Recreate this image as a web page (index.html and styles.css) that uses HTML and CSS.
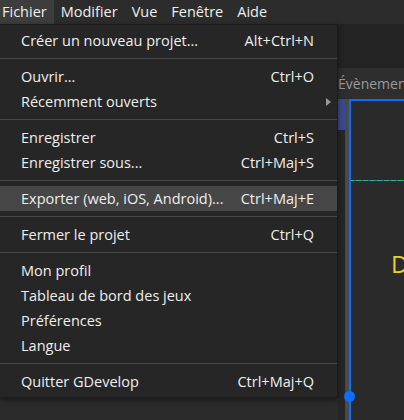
FILE: index.html
```html
<!DOCTYPE html>
<html lang="fr">
<head>
<meta charset="utf-8">
<title>GDevelop</title>
<link rel="stylesheet" href="styles.css">
</head>
<body>
<div class="app">
  <nav class="menubar">
    <span class="menubar-item active">Fichier</span>
    <span class="menubar-item">Modifier</span>
    <span class="menubar-item">Vue</span>
    <span class="menubar-item">Fenêtre</span>
    <span class="menubar-item">Aide</span>
  </nav>
  <div class="toolbar"></div>
  <div class="tabs"><span class="tab">Évènements</span></div>
  <div class="editor">
    <div class="side"></div>
    <div class="ruler"><div class="ruler-thumb"></div></div>
    <div class="track"></div>
    <div class="canvas">
      <div class="guide"></div>
      <div class="scene-text">D</div>
      <div class="handle"></div>
    </div>
  </div>

  <div class="menu">
    <div class="row"><span class="label">Créer un nouveau projet...</span><span class="kbd">Alt+Ctrl+N</span><span class="end"></span></div>
    <div class="sep"></div>
    <div class="row"><span class="label">Ouvrir...</span><span class="kbd">Ctrl+O</span><span class="end"></span></div>
    <div class="row"><span class="label">Récemment ouverts</span><span class="end"><span class="arrow"></span></span></div>
    <div class="sep"></div>
    <div class="row"><span class="label">Enregistrer</span><span class="kbd">Ctrl+S</span><span class="end"></span></div>
    <div class="row"><span class="label">Enregistrer sous...</span><span class="kbd">Ctrl+Maj+S</span><span class="end"></span></div>
    <div class="sep"></div>
    <div class="row hover"><span class="label">Exporter (web, iOS, Android)...</span><span class="kbd">Ctrl+Maj+E</span><span class="end"></span></div>
    <div class="sep"></div>
    <div class="row"><span class="label">Fermer le projet</span><span class="kbd">Ctrl+Q</span><span class="end"></span></div>
    <div class="sep"></div>
    <div class="row"><span class="label">Mon profil</span><span class="end"></span></div>
    <div class="row"><span class="label">Tableau de bord des jeux</span><span class="end"></span></div>
    <div class="row"><span class="label">Préférences</span><span class="end"></span></div>
    <div class="row"><span class="label">Langue</span><span class="end"></span></div>
    <div class="sep"></div>
    <div class="row"><span class="label">Quitter GDevelop</span><span class="kbd">Ctrl+Maj+Q</span><span class="end"></span></div>
  </div>
</div>
</body>
</html>
```

FILE: styles.css
```css
* { box-sizing: border-box; }

html, body {
  margin: 0;
  padding: 0;
  background: #2b2b2b;
}

body {
  width: 404px;
  height: 420px;
  overflow: hidden;
  font-family: "Open Sans", "Noto Sans", sans-serif;
  font-size: 14.5px;
  color: #eeeeee;
}

.app {
  position: relative;
  display: flex;
  flex-direction: column;
  height: 420px;
}

.menubar {
  display: flex;
  height: 24px;
  margin-left: -5px;
  background: #2c2c2c;
  flex: none;
}

.menubar-item {
  padding: 0 7px;
  line-height: 24px;
  height: 24px;
}

.menubar-item.active {
  background: #3d3d3d;
}

.toolbar {
  height: 44px;
  flex: none;
  background: #232323;
}

.tabs {
  height: 30px;
  flex: none;
  background: #2e2e2e;
  padding-left: 338px;
  padding-top: 6px;
  white-space: nowrap;
  overflow: hidden;
}

.tab {
  font-size: 14px;
  line-height: 20px;
  color: #9a9a9a;
}

.editor {
  flex: 1;
  display: flex;
  min-height: 0;
  padding-top: 1px;
  background: #2b2b2b;
}

.side {
  width: 338px;
  flex: none;
  background: #2b2b2b;
}

.ruler {
  width: 7px;
  flex: none;
  background: #262626;
}

.ruler-thumb {
  height: 31px;
  background: #3b4a90;
}

.track {
  width: 4px;
  flex: none;
  background: #4a4a4a;
}

.canvas {
  position: relative;
  flex: 1;
  background: #2a2a2a;
  border-left: 2px solid #0f6cff;
  border-top: 2px solid #0f6cff;
}

.guide {
  position: absolute;
  left: 0;
  right: 0;
  top: 79px;
  height: 1px;
  background: repeating-linear-gradient(90deg, #22c35a 0 3px, #6a4fc8 3px 5px, #2fb8a0 5px 7px);
}

.scene-text {
  position: absolute;
  left: 40px;
  top: 146px;
  font-size: 24px;
  color: #e8d11f;
}

.handle {
  position: absolute;
  left: -7px;
  top: 290px;
  width: 11px;
  height: 11px;
  border-radius: 50%;
  background: #0f6cff;
}

.menu {
  position: absolute;
  left: -1px;
  top: 24px;
  width: 339px;
  background: #262626;
  border: 1px solid #1b1b1b;
  padding: 3px 0;
  box-shadow: 0 2px 6px rgba(0, 0, 0, 0.4);
}

.row {
  display: flex;
  align-items: center;
  height: 25px;
  padding-left: 21px;
  white-space: nowrap;
}

.row.hover {
  background: #464646;
}

.label {
  flex: 1;
}

.kbd {
  flex: none;
}

.end {
  width: 23px;
  flex: none;
  display: flex;
  align-items: center;
}

.arrow {
  margin-left: 12px;
  width: 0;
  height: 0;
  border-top: 4px solid transparent;
  border-bottom: 4px solid transparent;
  border-left: 5px solid #9a9a9a;
}

.sep {
  height: 1px;
  margin: 5px 0;
  background: #474747;
}
```
